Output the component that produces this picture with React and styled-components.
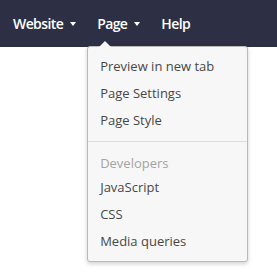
import React from "react";
import styled, { createGlobalStyle } from "styled-components";

const Global = createGlobalStyle`
  html, body { margin: 0; padding: 0; background: #ffffff; }
  body { font-family: "Open Sans", "Noto Sans", sans-serif; }
`;

const Page = styled.div`
  width: 277px;
  height: 278px;
  position: relative;
  overflow: hidden;
  background: #fff;
`;

const NavBar = styled.nav`
  height: 47px;
  background: #2d3044;
  display: flex;
  align-items: center;
  padding: 0 0 0 13px;
  gap: 21px;
`;

const NavItem = styled.div`
  position: relative;
  display: flex;
  align-items: center;
  gap: 7px;
  color: #ffffff;
  font-family: "Open Sans", sans-serif;
  font-weight: 600;
  font-size: 14px;
  letter-spacing: -0.6px;
  height: 100%;
  padding-bottom: 1px;
`;

const Caret = styled.span`
  width: 0;
  height: 0;
  border-left: 3.5px solid transparent;
  border-right: 3.5px solid transparent;
  border-top: 4px solid #ffffff;
  margin-top: 2px;
`;

const Menu = styled.div`
  position: absolute;
  top: 46px;
  left: -10px;
  width: 159px;
  background: #f7f7f7;
  border: 1px solid #b9b9b9;
  border-radius: 3px;
  box-shadow: 0 2px 4px rgba(0, 0, 0, 0.18);
  padding: 6px 0 6px;
  display: flex;
  flex-direction: column;
  z-index: 5;
  letter-spacing: 0;

  &::before {
    content: "";
    position: absolute;
    top: -6px;
    left: 11px;
    border-left: 6px solid transparent;
    border-right: 6px solid transparent;
    border-bottom: 6px solid #f7f7f7;
  }
`;

const MenuItem = styled.div`
  height: ${(p) => (p.$header ? "22px" : "27px")};
  display: flex;
  align-items: center;
  padding-left: 12px;
  font-family: "Open Sans", sans-serif;
  font-weight: 400;
  font-size: 13px;
  color: ${(p) => (p.$header ? "#a3a3a3" : "#474747")};
  white-space: nowrap;
`;

const Divider = styled.div`
  height: 1px;
  background: #dcdcdc;
  margin: 7px 0 10px;
`;

export default function App() {
  return (
    <Page>
      <Global />
      <NavBar>
        <NavItem>
          Website <Caret />
        </NavItem>
        <NavItem>
          Page <Caret />
          <Menu>
            <MenuItem>Preview in new tab</MenuItem>
            <MenuItem>Page Settings</MenuItem>
            <MenuItem>Page Style</MenuItem>
            <Divider />
            <MenuItem $header>Developers</MenuItem>
            <MenuItem>JavaScript</MenuItem>
            <MenuItem>CSS</MenuItem>
            <MenuItem>Media queries</MenuItem>
          </Menu>
        </NavItem>
        <NavItem>Help</NavItem>
      </NavBar>
    </Page>
  );
}
